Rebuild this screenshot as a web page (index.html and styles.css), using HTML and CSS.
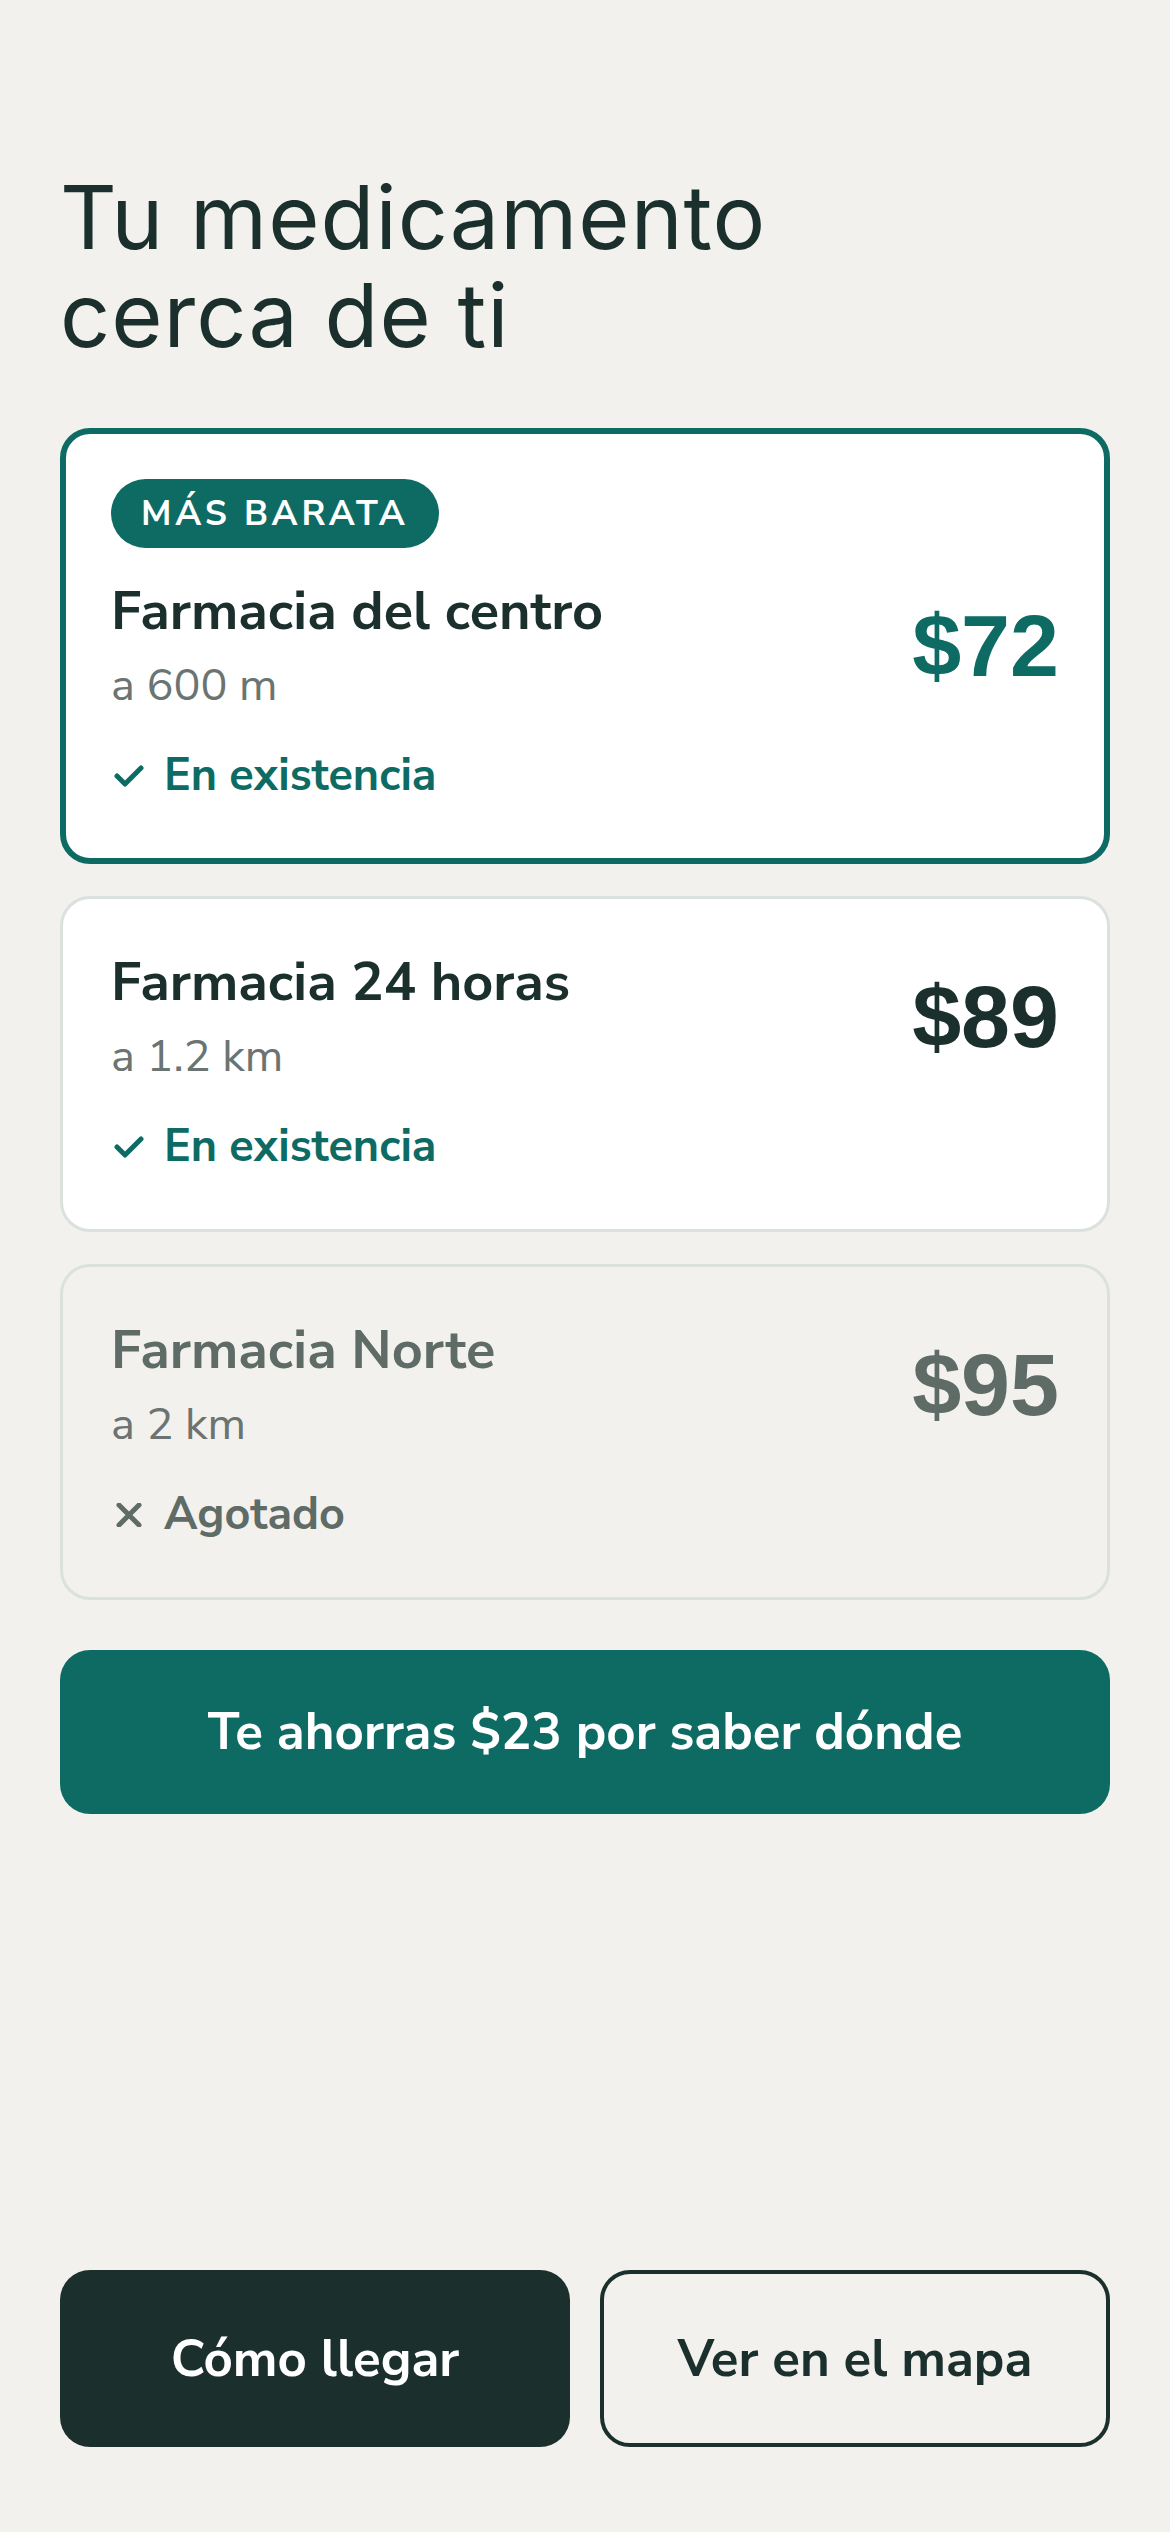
FILE: index.html
```html
<!DOCTYPE html>
<html lang="es">
<head>
  <meta charset="UTF-8">
  <meta name="viewport" content="width=device-width, initial-scale=1.0">
  <title>Tu medicamento cerca de ti</title>
  <link rel="stylesheet" href="styles.css">
</head>
<body>
  <div class="screen">
    <h1 class="title">Tu medicamento<br>cerca de ti</h1>

    <!-- Pharmacy list -->
    <div class="cards">
      <div class="card card-best">
        <span class="badge">MÁS BARATA</span>
        <div class="card-main">
          <div class="info">
            <div class="name">Farmacia del centro</div>
            <div class="dist">a 600 m</div>
          </div>
          <div class="price">$72</div>
        </div>
        <div class="status ok">
          <svg viewBox="0 0 30 24" width="30" height="24"><path d="M3 12 L11 20 L27 4" fill="none" stroke="currentColor" stroke-width="5" stroke-linecap="round" stroke-linejoin="round"/></svg>
          En existencia
        </div>
      </div>

      <div class="card">
        <div class="card-main">
          <div class="info">
            <div class="name">Farmacia 24 horas</div>
            <div class="dist">a 1.2 km</div>
          </div>
          <div class="price">$89</div>
        </div>
        <div class="status ok">
          <svg viewBox="0 0 30 24" width="30" height="24"><path d="M3 12 L11 20 L27 4" fill="none" stroke="currentColor" stroke-width="5" stroke-linecap="round" stroke-linejoin="round"/></svg>
          En existencia
        </div>
      </div>

      <div class="card card-out">
        <div class="card-main">
          <div class="info">
            <div class="name">Farmacia Norte</div>
            <div class="dist">a 2 km</div>
          </div>
          <div class="price">$95</div>
        </div>
        <div class="status out">
          <svg viewBox="0 0 30 24" width="30" height="24"><path d="M5 2 L25 22 M25 2 L5 22" fill="none" stroke="currentColor" stroke-width="5" stroke-linecap="round"/></svg>
          Agotado
        </div>
      </div>
    </div>

    <div class="savings">Te ahorras $23 por saber dónde</div>

    <!-- Bottom actions -->
    <div class="actions">
      <button class="btn btn-dark">Cómo llegar</button>
      <button class="btn btn-outline">Ver en el mapa</button>
    </div>
  </div>
</body>
</html>
```

FILE: styles.css
```css
body {
  margin: 0;
  background-color: #f2f1ed;
  font-family: "Nunito Sans", Lato, "Noto Sans", sans-serif;
  color: #1b302d;
}

.screen {
  min-height: 100vh;
  box-sizing: border-box;
  padding: 168px 60px 85px;
  display: flex;
  flex-direction: column;
}

.title {
  margin: 0 0 64px;
  font-family: Inter, "Liberation Sans", sans-serif;
  font-weight: 400;
  font-size: 88px;
  line-height: 98px;
  letter-spacing: 1px;
  color: #1b302d;
}

.cards {
  display: flex;
  flex-direction: column;
  gap: 32px;
}

.card {
  background-color: #ffffff;
  border: 3px solid #dbe1dd;
  border-radius: 30px;
  padding: 50px 48px 54px;
}

.card-best {
  border: 6px solid #0e6b64;
  padding: 45px 45px 54px;
}

.card-out {
  background-color: #f2f1ed;
}

.badge {
  display: inline-block;
  height: 69px;
  line-height: 69px;
  padding: 0 30px;
  border-radius: 35px;
  background-color: #0e6b64;
  color: #ffffff;
  font-weight: 700;
  font-size: 35px;
  letter-spacing: 3.8px;
  margin-bottom: 30px;
}

.card-main {
  display: flex;
  align-items: center;
  justify-content: space-between;
}

.name {
  font-size: 54px;
  line-height: 66px;
  font-weight: 700;
  color: #1b302d;
}

.dist {
  margin-top: 14px;
  font-size: 45px;
  line-height: 56px;
  color: #6b7471;
}

.price {
  font-family: "Liberation Sans", Arial, sans-serif;
  font-weight: 700;
  font-size: 88px;
  line-height: 84px;
  color: #1b302d;
}

.card-best .price {
  color: #0e6b64;
}

.card-out .name,
.card-out .price {
  color: #5f6b66;
}

.status {
  margin-top: 34px;
  display: flex;
  align-items: center;
  gap: 20px;
  font-size: 45px;
  line-height: 56px;
  font-weight: 700;
}

.status svg {
  margin-left: 3px;
}

.ok {
  color: #0e6b64;
}

.out {
  color: #5f6b66;
}

.savings {
  margin-top: 50px;
  height: 164px;
  border-radius: 30px;
  background-color: #0e6b64;
  color: #ffffff;
  font-weight: 700;
  font-size: 51px;
  display: flex;
  align-items: center;
  justify-content: center;
}

.actions {
  margin-top: auto;
  display: grid;
  grid-template-columns: 1fr 1fr;
  gap: 30px;
}

.btn {
  height: 177px;
  border-radius: 30px;
  font-family: inherit;
  font-weight: 700;
  font-size: 51px;
  cursor: pointer;
}

.btn-dark {
  background-color: #1b302d;
  border: none;
  color: #ffffff;
}

.btn-outline {
  background-color: transparent;
  border: 4px solid #1b302d;
  color: #1b302d;
}
```
